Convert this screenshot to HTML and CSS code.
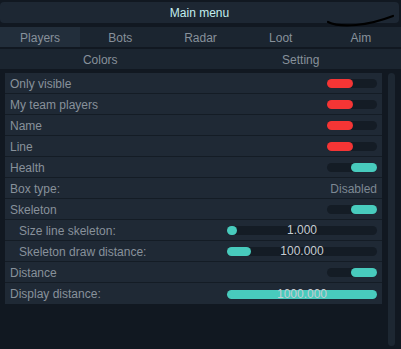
FILE: index.html
```html
<!DOCTYPE html>
<html lang="en">
<head>
    <meta charset="UTF-8">
    <title>Main menu</title>
    <link rel="stylesheet" href="styles.css">
</head>
<body>

    <div class="menu">
        <div class="title">Main menu</div>

        <!-- scribble over the title bar -->
        <svg class="scribble" width="70" height="14" viewBox="0 0 70 14">
            <path d="M2 8 C 8 11, 18 12, 30 11 C 42 10, 54 7, 67 2" fill="none" stroke="#000" stroke-width="2.2" stroke-linecap="round"/>
        </svg>

        <div class="tabs">
            <div class="tab active">Players</div>
            <div class="tab">Bots</div>
            <div class="tab">Radar</div>
            <div class="tab">Loot</div>
            <div class="tab">Aim</div>
        </div>
        <div class="tabs two">
            <div class="tab">Colors</div>
            <div class="tab">Setting</div>
        </div>

        <div class="body">
            <div class="panel">
                <div class="row"><span>Only visible</span><div class="toggle off"></div></div>
                <div class="row"><span>My team players</span><div class="toggle off"></div></div>
                <div class="row"><span>Name</span><div class="toggle off"></div></div>
                <div class="row"><span>Line</span><div class="toggle off"></div></div>
                <div class="row"><span>Health</span><div class="toggle on"></div></div>
                <div class="row"><span>Box type:</span><span class="value">Disabled</span></div>
                <div class="row"><span>Skeleton</span><div class="toggle on"></div></div>
                <div class="row sub">
                    <span>Size line skeleton:</span>
                    <div class="slider"><div class="fill" style="width: 10px"></div><span>1.000</span></div>
                </div>
                <div class="row sub">
                    <span>Skeleton draw distance:</span>
                    <div class="slider"><div class="fill" style="width: 24px"></div><span>100.000</span></div>
                </div>
                <div class="row"><span>Distance</span><div class="toggle on"></div></div>
                <div class="row">
                    <span>Display distance:</span>
                    <div class="slider"><div class="fill" style="width: 100%"></div><span>1000.000</span></div>
                </div>
            </div>
            <div class="scrollbar"></div>
        </div>
    </div>

</body>
</html>
```

FILE: styles.css
```css
* {
    box-sizing: border-box;
    font-family: "Liberation Sans", Arial, sans-serif;
}

body {
    margin: 0;
    background: #111821;
    color: #88919b;
    font-size: 12px;
    width: 401px;
    height: 349px;
    overflow: hidden;
}

.menu {
    position: relative;
    padding-top: 2px;
}

.title {
    height: 21px;
    margin-right: 2px;
    background: #1d2733;
    border-radius: 4px;
    color: #c4eeee;
    text-align: center;
    line-height: 23px;
}

.scribble {
    position: absolute;
    left: 326px;
    top: 14px;
}

.tabs {
    display: flex;
    margin-top: 4px;
    height: 20px;
    background: #1b2530;
}

.tabs.two {
    margin-top: 2px;
}

.tab {
    flex: 1;
    text-align: center;
    line-height: 22px;
}

.tab.active {
    background: #222e3b;
}

.body {
    display: flex;
    margin-top: 4px;
    padding-left: 5px;
}

.panel {
    width: 377px;
    align-self: flex-start;
    background: #1f2935;
}

.row {
    display: flex;
    justify-content: space-between;
    align-items: center;
    height: 21px;
    padding: 1px 5px 0;
    border-bottom: 1px solid #141c25;
}

.row:last-child {
    border-bottom: none;
}

.row.sub {
    padding-left: 14px;
}

.value {
    color: #7d8893;
}

.toggle {
    width: 50px;
    height: 9px;
    border-radius: 5px;
    background: #141c25;
    position: relative;
}

.toggle::after {
    content: "";
    position: absolute;
    top: 0;
    width: 26px;
    height: 9px;
    border-radius: 5px;
}

.toggle.off::after {
    left: 0;
    background: #f53535;
}

.toggle.on::after {
    right: 0;
    background: #48cbbd;
}

.slider {
    position: relative;
    width: 150px;
    height: 9px;
    border-radius: 5px;
    background: #141c25;
}

.slider .fill {
    height: 9px;
    border-radius: 5px;
    background: #48cbbd;
}

.slider span {
    position: absolute;
    left: 0;
    right: 0;
    top: -3px;
    text-align: center;
    line-height: 15px;
    color: #c6ccd2;
}

.scrollbar {
    width: 7px;
    height: 273px;
    margin-left: 6px;
    border-radius: 4px;
    background: #1d2732;
}
```
